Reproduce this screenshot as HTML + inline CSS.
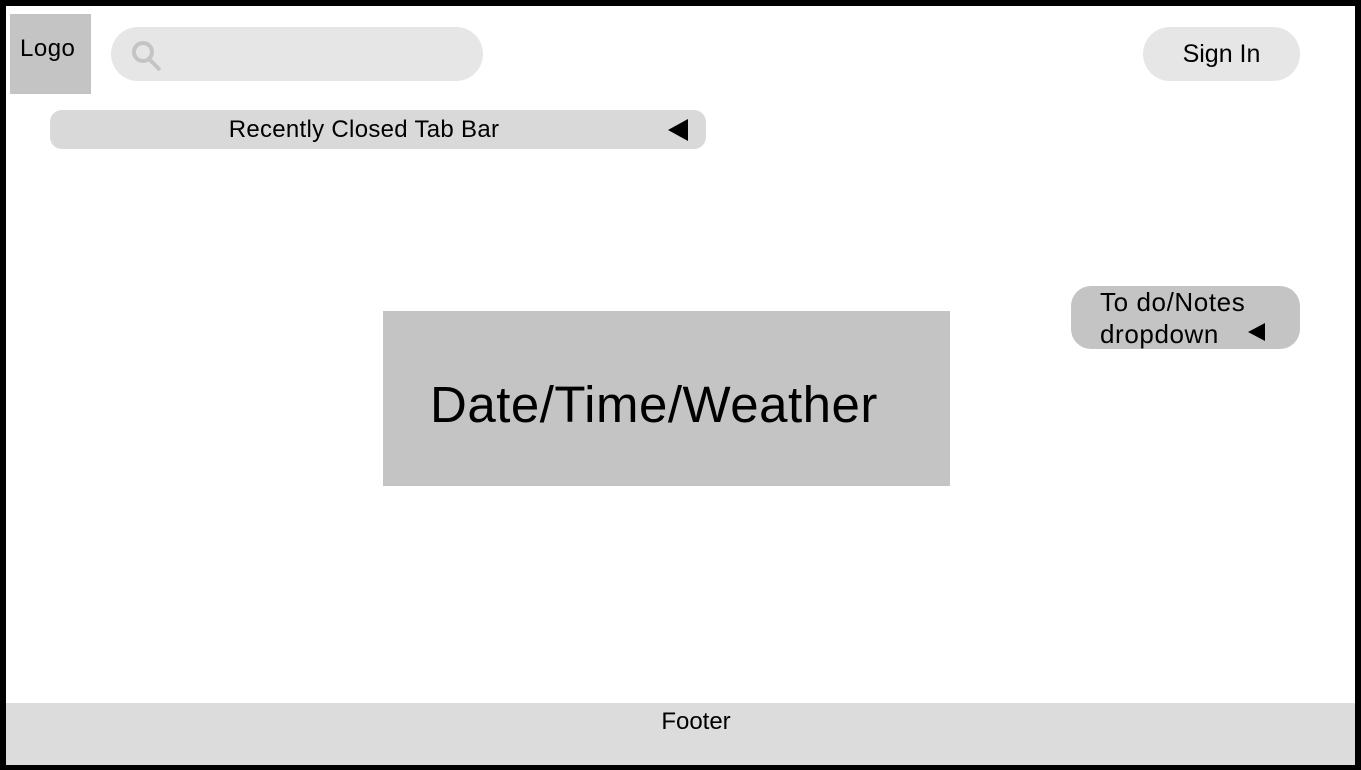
<!DOCTYPE html>
<html><head><style>
body{margin:0;width:1361px;height:770px;background:#000;position:relative;overflow:hidden;font-family:"Liberation Sans",sans-serif;color:#000}
.a{position:absolute}
</style></head><body>
<div class="a" style="left:6px;top:6px;width:1349px;height:759px;background:#fff"></div>
<div class="a" style="left:10px;top:14px;width:81px;height:80px;background:#c4c4c4"></div>
<div class="a" style="left:20px;top:35px;font-size:24px;letter-spacing:0.5px">Logo</div>
<div class="a" style="left:111px;top:27px;width:372px;height:54px;background:#e6e6e6;border-radius:27px"></div>
<svg class="a" style="left:128px;top:38px" width="36" height="36"><circle cx="15" cy="14" r="9" fill="none" stroke="#c4c4c4" stroke-width="4"/><line x1="21" y1="21" x2="32" y2="32" stroke="#c4c4c4" stroke-width="4"/></svg>
<div class="a" style="left:1143px;top:27px;width:157px;height:54px;background:#e6e6e6;border-radius:27px;text-align:center;line-height:54px;font-size:25px">Sign In</div>
<div class="a" style="left:50px;top:110px;width:656px;height:39px;background:#d9d9d9;border-radius:12px"></div>
<div class="a" style="left:50px;top:110px;width:628px;line-height:40px;text-align:center;font-size:24px;letter-spacing:0.3px">Recently Closed Tab Bar</div>
<svg class="a" style="left:666px;top:118px" width="24" height="24"><polygon points="22,1 22,23 2,12" fill="#000"/></svg>
<div class="a" style="left:1071px;top:286px;width:229px;height:63px;background:#c4c4c4;border-radius:20px"></div>
<div class="a" style="left:1100px;top:286px;font-size:26px;line-height:32px;letter-spacing:0.6px">To do/Notes<br>dropdown</div>
<svg class="a" style="left:1247px;top:322px" width="20" height="20"><polygon points="18,1 18,19 1,10" fill="#000"/></svg>
<div class="a" style="left:383px;top:311px;width:567px;height:175px;background:#c4c4c4"></div>
<div class="a" style="left:430px;top:375px;font-size:51px;line-height:60px;letter-spacing:0.5px">Date/Time/Weather</div>
<div class="a" style="left:6px;top:703px;width:1349px;height:62px;background:#dcdcdc"></div>
<div class="a" style="left:6px;top:708px;width:1380px;text-align:center;font-size:24px">Footer</div>
</body></html>
